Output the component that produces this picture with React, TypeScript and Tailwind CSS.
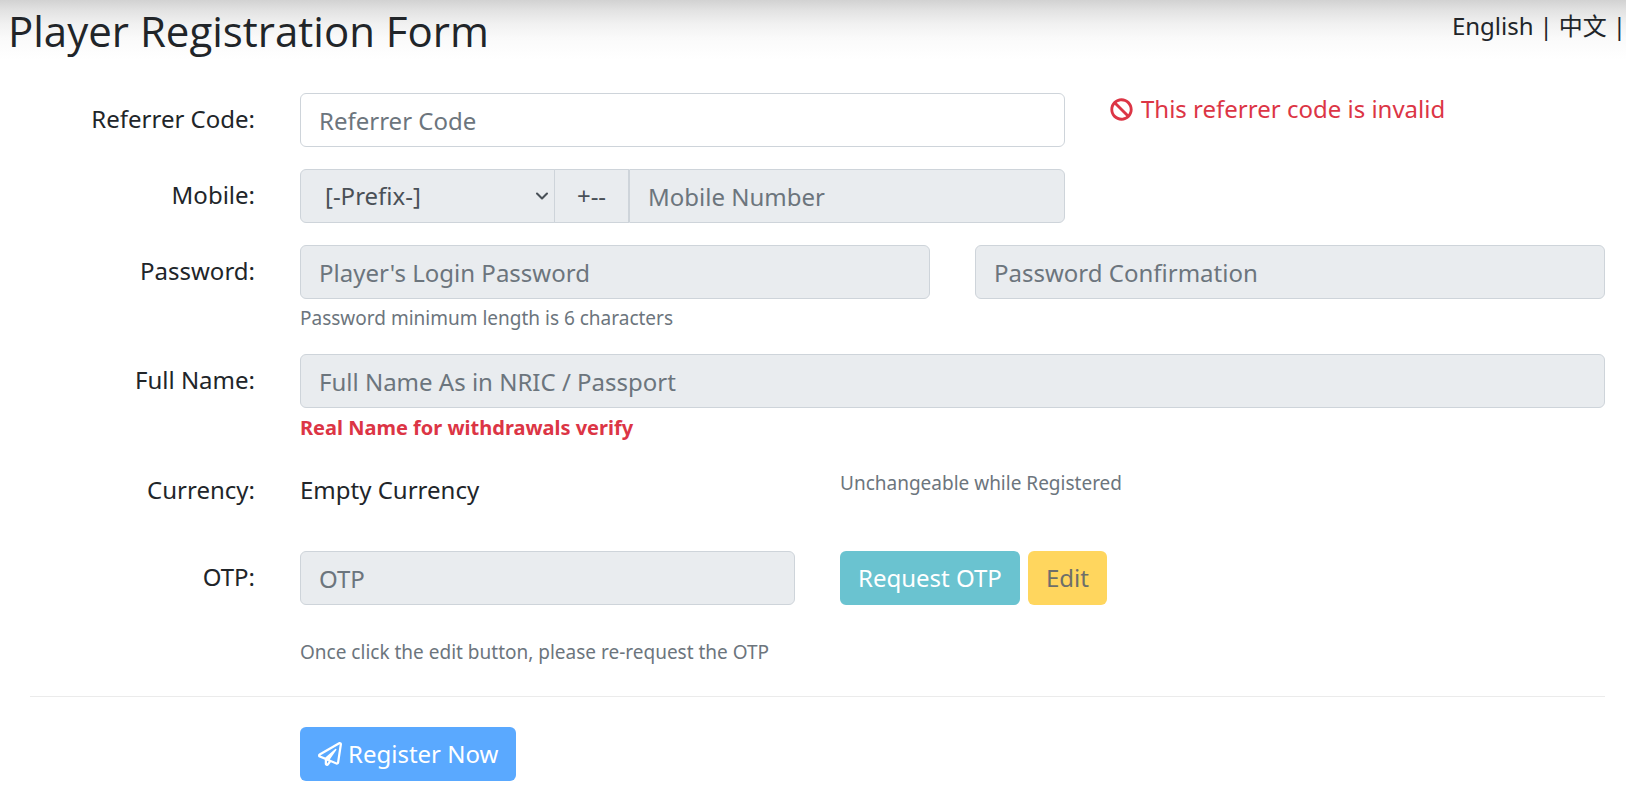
import type { ReactNode } from 'react'
import { ChevronDown } from 'lucide-react'
import { FaBan, FaRegPaperPlane } from 'react-icons/fa'

const control =
  'h-[54px] w-full min-w-0 border border-[#ced4da] px-[18px] text-[#495057] placeholder:text-[#6c757d] placeholder:opacity-100 disabled:bg-[#e9ecef] disabled:opacity-100'
const hint = 'pt-1.5 text-[19px] leading-[27px] text-[#6c757d]'

interface RowProps {
  label?: string
  htmlFor?: string
  children: ReactNode
}

function Row({ label, htmlFor, children }: RowProps) {
  return (
    <div className="grid grid-cols-12 gap-x-[45px]">
      <div className="col-span-2 text-right leading-[52px]">
        {label && <label htmlFor={htmlFor}>{label}</label>}
      </div>
      {children}
    </div>
  )
}

export default function App() {
  return (
    <div className="min-h-screen overflow-x-hidden bg-white bg-[linear-gradient(to_bottom,#d2d2d2_0px,#e3e3e3_11px,#f1f1f1_24px,#fafafa_38px,#ffffff_60px)] bg-no-repeat font-['Noto_Sans','Noto_Sans_CJK_SC',sans-serif] text-[24px] text-[#212529]">
      <header className="flex items-start justify-between pl-2">
        <h1 className="font-['Open_Sans','Noto_Sans',sans-serif] text-[42px] leading-[62px]">Player Registration Form</h1>
        <nav className="flex gap-[6px] pt-2 leading-9 whitespace-nowrap">
          <a href="#en">English</a>
          <span>|</span>
          <a href="#zh">中文</a>
          <span>|</span>
        </nav>
      </header>

      <form className="flex flex-col pt-[31px] pr-[21px] pb-4 pl-[30px]" onSubmit={(e) => e.preventDefault()}>
        <div className="flex flex-col gap-[22px]">
          <Row label="Referrer Code:" htmlFor="referrer">
            <div className="col-span-6">
              <input id="referrer" type="text" placeholder="Referrer Code" className={`${control} rounded-md`} />
            </div>
            <div className="col-span-4 flex h-8 items-center gap-2 text-[#dc3545]">
              <FaBan size={23} />
              <span>This referrer code is invalid</span>
            </div>
          </Row>

          <Row label="Mobile:" htmlFor="mobile">
            <div className="col-span-6 flex">
              <div className="relative w-1/3 shrink-0">
                <select aria-label="Prefix" disabled className={`${control} appearance-none rounded-l-md pl-6`}>
                  <option>[-Prefix-]</option>
                </select>
                <ChevronDown size={20} strokeWidth={2.5} className="pointer-events-none absolute top-[17px] right-[3px] text-[#495057]" />
              </div>
              <span className="-ml-px flex w-[75px] shrink-0 items-center justify-center border border-[#ced4da] bg-[#e9ecef] whitespace-nowrap text-[#495057]">
                +--
              </span>
              <input id="mobile" type="tel" disabled placeholder="Mobile Number" className={`${control} rounded-r-md`} />
            </div>
          </Row>

          <Row label="Password:" htmlFor="password">
            <div className="col-span-5">
              <input id="password" type="password" disabled placeholder="Player's Login Password" className={`${control} rounded-md`} />
              <p className={hint}>Password minimum length is 6 characters</p>
            </div>
            <div className="col-span-5">
              <input
                type="password"
                aria-label="Password Confirmation"
                disabled
                placeholder="Password Confirmation"
                className={`${control} rounded-md`}
              />
            </div>
          </Row>

          <Row label="Full Name:" htmlFor="fullname">
            <div className="col-span-10">
              <input id="fullname" type="text" disabled placeholder="Full Name As in NRIC / Passport" className={`${control} rounded-md`} />
              <p className="pt-1.5 text-[20px] leading-[27px] font-bold text-[#dc3545]">Real Name for withdrawals verify</p>
            </div>
          </Row>
        </div>

        <div className="pt-[23px]">
          <Row label="Currency:">
            <div className="col-span-4 leading-[52px]">Empty Currency</div>
            <p className={`${hint} col-span-6`}>Unchangeable while Registered</p>
          </Row>
        </div>

        <div className="pt-[35px]">
          <Row label="OTP:" htmlFor="otp">
            <div className="col-span-4">
              <input id="otp" type="text" disabled placeholder="OTP" className={`${control} rounded-md`} />
            </div>
            <div className="col-span-6 flex gap-2">
              <button type="button" disabled className="h-[54px] rounded-md bg-[#6ac3d0] px-[18px] text-white">
                Request OTP
              </button>
              <button type="button" disabled className="h-[54px] rounded-md bg-[#ffd65e] px-[18px] text-[#6e6f6a]">
                Edit
              </button>
            </div>
          </Row>
        </div>

        <div className="pt-7">
          <Row>
            <p className={`${hint} col-span-10`}>Once click the edit button, please re-request the OTP</p>
          </Row>
        </div>

        <hr className="my-[30px] border-t border-[#ebebeb]" />

        <Row>
          <div className="col-span-10">
            <button type="submit" disabled className="flex h-[54px] items-center gap-1.5 rounded-md bg-[#5aa9ff] px-[18px] text-white">
              <FaRegPaperPlane size={24} />
              Register Now
            </button>
          </div>
        </Row>
      </form>
    </div>
  )
}
